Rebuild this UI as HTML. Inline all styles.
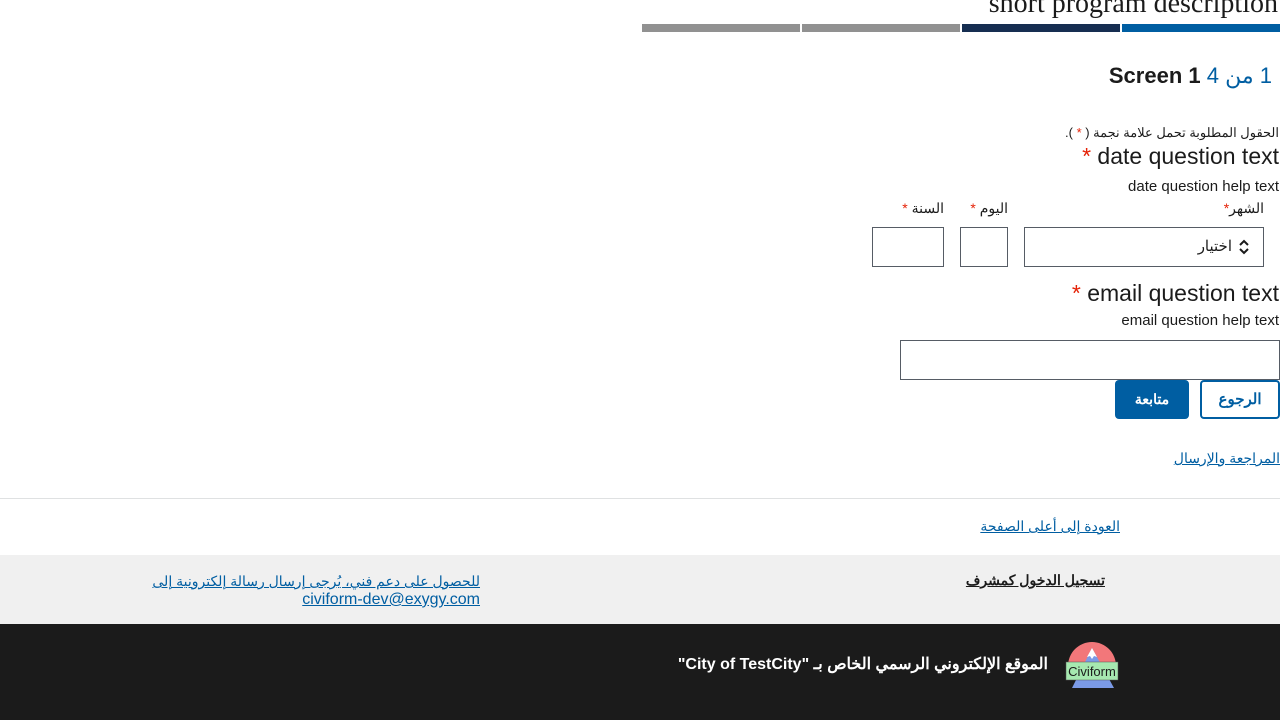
<!DOCTYPE html>
<html><head><meta charset="utf-8"><style>
*{margin:0;padding:0;box-sizing:border-box}
body{width:1280px;height:720px;overflow:hidden;background:#fff;font-family:"Liberation Sans","Noto Sans CJK SC",sans-serif;color:#1b1b1b;position:relative}
.a{position:absolute;white-space:nowrap}
.r{text-align:right}
.star{color:#e52207}
.box{position:absolute;border:1px solid #565c65;background:#fff}
a{color:#005ea2;text-decoration:underline}
</style></head><body>
<div class="a r" style="right:2px;top:-12px;font-family:'Liberation Serif',serif;font-size:28px">short program description</div>
<div class="a" style="left:642px;top:24px;width:158px;height:8px;background:#919191"></div>
<div class="a" style="left:802px;top:24px;width:158px;height:8px;background:#919191"></div>
<div class="a" style="left:962px;top:24px;width:158px;height:8px;background:#162e51"></div>
<div class="a" style="left:1122px;top:24px;width:158px;height:8px;background:#005ea2"></div>
<div class="a r" style="right:8px;top:63px;font-size:22px" dir="rtl"><span style="color:#005ea2">1 من 4</span> <b dir="ltr">Screen 1</b></div>
<div class="a r" style="right:1px;top:125px;font-size:13px" dir="rtl">الحقول المطلوبة تحمل علامة نجمة ( <span class="star">*</span> ).</div>
<div class="a r" style="right:1px;top:143px;font-size:23px"><span class="star">*</span> date question text</div>
<div class="a r" style="right:1px;top:178px;font-size:15px">date question help text</div>
<div class="a r" style="right:16px;top:200px;font-size:14px"><span class="star">*</span>الشهر</div>
<div class="a r" style="right:272px;top:200px;font-size:14px"><span class="star">*</span> اليوم</div>
<div class="a r" style="right:336px;top:200px;font-size:14px"><span class="star">*</span> السنة</div>
<div class="box" style="left:1024px;top:227px;width:240px;height:40px"></div>
<div class="a r" style="right:48px;top:237px;font-size:15px">اختيار</div>
<svg class="a" style="left:1238px;top:238px" width="12" height="18" viewBox="0 0 12 18"><path d="M2 7l4-4 4 4M2 11l4 4 4-4" fill="none" stroke="#1b1b1b" stroke-width="2"/></svg>
<div class="box" style="left:960px;top:227px;width:48px;height:40px"></div>
<div class="box" style="left:872px;top:227px;width:72px;height:40px"></div>
<div class="a r" style="right:1px;top:280px;font-size:23px"><span class="star">*</span> email question text</div>
<div class="a r" style="right:1px;top:312px;font-size:15px">email question help text</div>
<div class="box" style="left:900px;top:340px;width:380px;height:40px"></div>
<div class="a" style="left:1200px;top:380px;width:80px;height:39px;border:2px solid #005ea2;border-radius:4px;color:#005ea2;font-weight:bold;font-size:15px;text-align:center;line-height:36px">الرجوع</div>
<div class="a" style="left:1115px;top:380px;width:74px;height:39px;background:#005ea2;border-radius:4px;color:#fff;font-weight:bold;font-size:14px;text-align:center;line-height:39px">متابعة</div>
<div class="a r" style="right:0;top:450px;font-size:14px"><a>المراجعة والإرسال</a></div>
<div class="a" style="left:0;top:498px;width:1280px;height:1px;background:#dfe1e2"></div>
<div class="a r" style="right:160px;top:518px;font-size:14px"><a>العودة إلى أعلى الصفحة</a></div>
<div class="a" style="left:0;top:555px;width:1280px;height:69px;background:#f0f0f0"></div>
<div class="a r" style="right:175px;top:572px;font-size:14px;font-weight:bold"><a style="color:#1b1b1b">تسجيل الدخول كمشرف</a></div>
<div class="a r" style="right:800px;top:572px;font-size:14px;line-height:18px"><a>للحصول على دعم فني، يُرجى إرسال رسالة إلكترونية إلى</a><br><a style="font-size:16px">civiform-dev@exygy.com</a></div>
<div class="a" style="left:0;top:624px;width:1280px;height:96px;background:#1b1b1b"></div>
<svg class="a" style="left:1064px;top:640px" width="56" height="48" viewBox="0 0 56 48"><path d="M4 26A24 24 0 0 1 52 26Z" fill="#f2777a"/><path d="M28 8L8 48H50Z" fill="#7b9ae6"/><path d="M28 8l-5 9 3-1 2 3 2-3 3 1z" fill="#fff"/><rect x="2" y="22" width="52" height="18" fill="#a6e8b0" stroke="#555" stroke-width=".5"/><text x="28" y="36" text-anchor="middle" font-family="Liberation Sans" font-size="13" fill="#1b1b1b">Civiform</text></svg>
<div class="a r" style="right:232px;top:654px;font-size:16px;font-weight:bold;color:#fff" dir="rtl">الموقع الإلكتروني الرسمي الخاص بـ "City of TestCity"</div>
</body></html>
